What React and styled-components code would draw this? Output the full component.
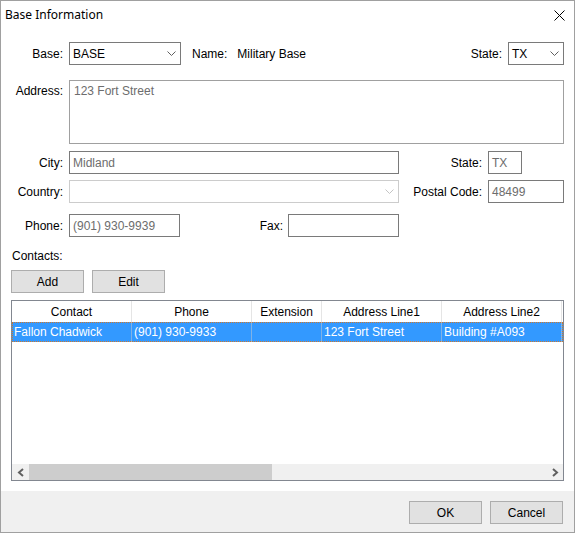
import React from 'react';
import styled, { createGlobalStyle } from 'styled-components';

const GlobalStyle = createGlobalStyle`
  html, body {
    margin: 0;
    padding: 0;
    background: #ffffff;
  }
  body {
    font-family: "Liberation Sans", Arial, sans-serif;
    font-size: 12px;
    color: #000;
  }
  * { box-sizing: border-box; }
`;

const columns = [
  { title: 'Contact', width: 120, value: 'Fallon Chadwick' },
  { title: 'Phone', width: 120, value: '(901) 930-9933' },
  { title: 'Extension', width: 70, value: '' },
  { title: 'Address Line1', width: 120, value: '123 Fort Street' },
  { title: 'Address Line2', width: 120, value: 'Building #A093' },
  { title: '', width: 120, value: '' },
];

const Chevron = ({ disabled }) => (
  <svg width="9" height="5" viewBox="0 0 9 5">
    <path d="M0.5 0.5 L4.5 4.5 L8.5 0.5" fill="none" stroke={disabled ? '#c4c4c4' : '#606060'} strokeWidth="1" />
  </svg>
);

const Arrow = ({ right }) => (
  <svg width="8" height="9" viewBox="0 0 8 9">
    <path
      d={right ? 'M2 1 L6 4.5 L2 8' : 'M6 1 L2 4.5 L6 8'}
      fill="none"
      stroke="#606060"
      strokeWidth="2"
    />
  </svg>
);

const App = () => {
  return (
    <>
      <GlobalStyle />
      <Window>
        <TitleBar>
          <Title>Base Information</Title>
          <CloseButton>
            <svg width="11" height="11" viewBox="0 0 11 11">
              <path d="M0.5 0.5 L10.5 10.5 M10.5 0.5 L0.5 10.5" stroke="#000" strokeWidth="1" />
            </svg>
          </CloseButton>
        </TitleBar>

        <Body>
          <TopRow>
            <Label>Base:</Label>
            <Combo width={112}>
              <span>BASE</span>
              <Chevron />
            </Combo>
            <NameLabel>Name:</NameLabel>
            <NameValue>Military Base</NameValue>
            <Spacer />
            <Label>State:</Label>
            <Combo width={56}>
              <span>TX</span>
              <Chevron />
            </Combo>
          </TopRow>

          <AddressRow>
            <Label top>Address:</Label>
            <TextArea>123 Fort Street</TextArea>
          </AddressRow>

          <FieldGrid>
            <Label>City:</Label>
            <Input>Midland</Input>
            <Label>State:</Label>
            <Input width={34}>TX</Input>

            <Label>Country:</Label>
            <Combo width={330} disabled>
              <span />
              <Chevron disabled />
            </Combo>
            <Label>Postal Code:</Label>
            <Input>48499</Input>
          </FieldGrid>

          <PhoneRow>
            <Label>Phone:</Label>
            <PhoneGroup>
              <Input width={111}>(901) 930-9939</Input>
              <Spacer />
              <FaxLabel>Fax:</FaxLabel>
              <Input width={111} />
            </PhoneGroup>
          </PhoneRow>

          <SectionLabel>Contacts:</SectionLabel>

          <ButtonRow>
            <Button>Add</Button>
            <Button>Edit</Button>
          </ButtonRow>

          <Table>
            <HeaderRow>
              {columns.map((c, i) => (
                <HeaderCell key={i} width={c.width}>{c.title}</HeaderCell>
              ))}
            </HeaderRow>
            <DataRow>
              {columns.map((c, i) => (
                <DataCell key={i} width={c.width}>{c.value}</DataCell>
              ))}
            </DataRow>
            <TableFill />
            <ScrollBar>
              <ScrollButton><Arrow /></ScrollButton>
              <ScrollTrack>
                <ScrollThumb />
              </ScrollTrack>
              <ScrollButton><Arrow right /></ScrollButton>
            </ScrollBar>
          </Table>
        </Body>

        <Footer>
          <Button>OK</Button>
          <Button>Cancel</Button>
        </Footer>
      </Window>
    </>
  );
};

export default App;

const Window = styled.div`
  width: 575px;
  height: 533px;
  border: 1px solid #a0a0a0;
  display: flex;
  flex-direction: column;
  background: #fff;
`;

const TitleBar = styled.div`
  height: 29px;
  display: flex;
  align-items: center;
  justify-content: space-between;
  padding: 0 9px 2px 4px;
`;

const Title = styled.div`
  font-family: "Segoe UI", "Noto Sans", "Liberation Sans", sans-serif;
  font-size: 12px;
  color: #000;
`;

const CloseButton = styled.div`
  display: flex;
  align-items: center;
  padding-top: 2px;
`;

const Body = styled.div`
  flex: 1;
  padding: 12px 10px 0 10px;
  display: flex;
  flex-direction: column;
`;

const TopRow = styled.div`
  display: flex;
  align-items: center;
  height: 23px;
  gap: 6px;
`;

const Spacer = styled.div`
  flex: 1;
`;

const Label = styled.div`
  min-width: 52px;
  text-align: right;
  white-space: nowrap;
  align-self: ${(p) => (p.top ? 'flex-start' : 'center')};
  padding-top: ${(p) => (p.top ? '4px' : '0')};
`;

const NameLabel = styled.div`
  margin-left: 5px;
  margin-right: 4px;
`;

const NameValue = styled.div``;

const Combo = styled.div`
  width: ${(p) => p.width}px;
  height: 23px;
  border: 1px solid ${(p) => (p.disabled ? '#cccccc' : '#7a7a7a')};
  background: #fff;
  display: flex;
  align-items: center;
  justify-content: space-between;
  padding: 0 4px 0 3px;
  color: #000;
`;

const AddressRow = styled.div`
  display: flex;
  gap: 6px;
  margin-top: 15px;
`;

const TextArea = styled.div`
  flex: 1;
  height: 64px;
  border: 1px solid #a0a0a0;
  padding: 3px 4px;
  color: #6d6d6d;
`;

const FieldGrid = styled.div`
  display: grid;
  grid-template-columns: 52px 330px 77px 76px;
  grid-template-rows: 23px 23px;
  column-gap: 6px;
  row-gap: 6px;
  margin-top: 7px;
  align-items: center;
`;

const Input = styled.div`
  width: ${(p) => (p.width ? `${p.width}px` : '100%')};
  height: 23px;
  border: 1px solid #7a7a7a;
  padding: 0 3px;
  display: flex;
  align-items: center;
  color: #6d6d6d;
  white-space: nowrap;
`;

const PhoneRow = styled.div`
  display: flex;
  align-items: center;
  gap: 6px;
  margin-top: 11px;
  height: 23px;
`;

const PhoneGroup = styled.div`
  width: 330px;
  display: flex;
  align-items: center;
  height: 23px;
`;

const FaxLabel = styled.div`
  margin-right: 5px;
`;

const SectionLabel = styled.div`
  margin-top: 12px;
  height: 14px;
  line-height: 14px;
  padding-left: 1px;
`;

const ButtonRow = styled.div`
  display: flex;
  gap: 8px;
  margin-top: 7px;
`;

const Button = styled.div`
  width: 73px;
  height: 23px;
  border: 1px solid #adadad;
  background: #e1e1e1;
  display: flex;
  align-items: center;
  justify-content: center;
  color: #000;
`;

const Table = styled.div`
  margin-top: 7px;
  height: 181px;
  border: 1px solid #828790;
  display: flex;
  flex-direction: column;
  overflow: hidden;
`;

const HeaderRow = styled.div`
  display: flex;
  height: 21px;
  flex-shrink: 0;
`;

const HeaderCell = styled.div`
  flex: 0 0 ${(p) => p.width}px;
  border-right: 1px solid #e5e5e5;
  display: flex;
  align-items: center;
  justify-content: center;
  white-space: nowrap;
  overflow: hidden;
`;

const DataRow = styled.div`
  display: flex;
  height: 20px;
  flex-shrink: 0;
  background: #3399ff;
  color: #fff;
  outline: 1px dotted #d0782a;
  outline-offset: -1px;
`;

const DataCell = styled.div`
  flex: 0 0 ${(p) => p.width}px;
  border-right: 1px solid #7fb2e6;
  display: flex;
  align-items: center;
  padding-left: 2px;
  white-space: nowrap;
  overflow: hidden;
`;

const TableFill = styled.div`
  flex: 1;
`;

const ScrollBar = styled.div`
  height: 16px;
  flex-shrink: 0;
  background: #f0f0f0;
  display: flex;
`;

const ScrollButton = styled.div`
  width: 17px;
  display: flex;
  align-items: center;
  justify-content: center;
`;

const ScrollTrack = styled.div`
  flex: 1;
  display: flex;
  align-items: stretch;
`;

const ScrollThumb = styled.div`
  width: 243px;
  background: #cdcdcd;
`;

const Footer = styled.div`
  height: 41px;
  background: #f0f0f0;
  display: flex;
  justify-content: flex-end;
  align-items: flex-start;
  gap: 8px;
  padding: 10px 11px 0 0;
`;
